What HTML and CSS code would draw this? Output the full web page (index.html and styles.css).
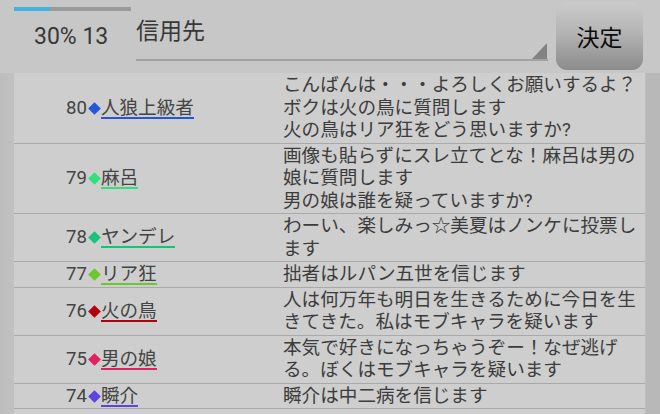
FILE: index.html
```html
<!DOCTYPE html>
<html lang="ja">
<head>
    <meta charset="UTF-8">
    <meta name="viewport" content="width=device-width, initial-scale=1.0">
    <title>信用先</title>
    <link rel="stylesheet" href="styles.css">
</head>
<body>
    <div class="top">
        <div class="stats">
            <div class="progress"><div class="progress-fill"></div></div>
            <div class="score">30% 13</div>
        </div>
        <div class="spinner">
            <span class="spinner-label">信用先</span>
            <span class="spinner-arrow"></span>
        </div>
        <div class="decide">決定</div>
    </div>

    <div class="list-wrap">
        <div class="list">
            <div class="row">
                <div class="who">80<i class="dia c-blue"></i><span class="name c-blue">人狼上級者</span></div>
                <div class="msg">こんばんは・・・よろしくお願いするよ？<br>ボクは火の鳥に質問します<br>火の鳥はリア狂をどう思いますか?</div>
            </div>
            <div class="row">
                <div class="who">79<i class="dia c-green"></i><span class="name c-green">麻呂</span></div>
                <div class="msg">画像も貼らずにスレ立てとな！麻呂は男の娘に質問します<br>男の娘は誰を疑っていますか?</div>
            </div>
            <div class="row">
                <div class="who">78<i class="dia c-teal"></i><span class="name c-teal">ヤンデレ</span></div>
                <div class="msg">わーい、楽しみっ☆美夏はノンケに投票します</div>
            </div>
            <div class="row">
                <div class="who">77<i class="dia c-lime"></i><span class="name c-lime">リア狂</span></div>
                <div class="msg">拙者はルパン五世を信じます</div>
            </div>
            <div class="row">
                <div class="who">76<i class="dia c-red"></i><span class="name c-red">火の鳥</span></div>
                <div class="msg">人は何万年も明日を生きるために今日を生きてきた。私はモブキャラを疑います</div>
            </div>
            <div class="row">
                <div class="who">75<i class="dia c-pink"></i><span class="name c-pink">男の娘</span></div>
                <div class="msg">本気で好きになっちゃうぞー！なぜ逃げる。ぼくはモブキャラを疑います</div>
            </div>
            <div class="row">
                <div class="who">74<i class="dia c-violet"></i><span class="name c-violet">瞬介</span></div>
                <div class="msg">瞬介は中二病を信じます</div>
            </div>
        </div>
    </div>
</body>
</html>
```

FILE: styles.css
```css
* {
    margin: 0;
    padding: 0;
    box-sizing: border-box;
}

body {
    width: 660px;
    height: 414px;
    overflow: hidden;
    background: #c7c7c7;
    color: #3c3c3c;
    font-family: Roboto, "Noto Sans CJK JP", sans-serif;
}

/* header: progress, spinner, button */
.top {
    display: flex;
    align-items: flex-start;
    height: 73px;
}

.stats {
    width: 122px;
    padding-left: 14px;
}

.progress {
    width: 117px;
    height: 4px;
    margin-top: 7px;
    background: #9a9a9a;
}

.progress-fill {
    width: 31%;
    height: 100%;
    background: #42b3e0;
}

.score {
    margin-top: 12px;
    padding-left: 20px;
    font-size: 23px;
    line-height: 27px;
    color: #383838;
}

.spinner {
    position: relative;
    width: 412px;
    height: 61px;
    margin-left: 14px;
    padding-top: 18px;
    border-bottom: 2px solid #a2a2a2;
}

.spinner-label {
    font-size: 23px;
    line-height: 27px;
    color: #383838;
}

.spinner-arrow {
    position: absolute;
    right: 1px;
    bottom: 0;
    width: 0;
    height: 0;
    border-left: 15px solid transparent;
    border-bottom: 16px solid #828282;
}

.decide {
    display: flex;
    align-items: center;
    justify-content: center;
    width: 87px;
    height: 68px;
    margin: 2px 0 0 8px;
    padding-bottom: 1px;
    border-radius: 11px;
    background: linear-gradient(#cbcbcb 0%, #b4b4b4 45%, #8b8b8b 100%);
    font-size: 23px;
    color: #0c0c0c;
}

/* list */
.list-wrap {
    height: 341px;
    padding: 0 15px 0 14px;
    background: linear-gradient(90deg, #bdbdbd 0, #c1c1c1 14px, #c1c1c1 645px, #b8b8b8 646px);
}

.list {
    height: 100%;
    background: #cecece;
}

.row {
    display: grid;
    grid-template-columns: 269px 1fr;
    border-bottom: 1px solid #a9a9a9;
}

.who {
    align-self: center;
    padding-left: 52px;
    font-size: 18.6px;
    line-height: 22.5px;
    color: #444;
    white-space: nowrap;
}

.dia {
    display: inline-block;
    width: 9px;
    height: 9px;
    margin: 0 2px 0 3px;
    transform: rotate(45deg);
    vertical-align: 1px;
}

.name {
    display: inline-block;
    line-height: 17px;
    border-bottom: 2px solid;
    color: #444;
}

.msg {
    padding: 1px 0;
    font-size: 18.6px;
    line-height: 22.5px;
    color: #3c3c3c;
}

.c-blue { background: #2555d8; border-color: #2555d8; }
.c-green { background: #2fe07c; border-color: #2fe07c; }
.c-teal { background: #14c47b; border-color: #14c47b; }
.c-lime { background: #6cc830; border-color: #6cc830; }
.c-red { background: #b3000d; border-color: #b3000d; }
.c-pink { background: #e0215d; border-color: #e0215d; }
.c-violet { background: #5b45e0; border-color: #5b45e0; }

.name.c-blue, .name.c-green, .name.c-teal, .name.c-lime,
.name.c-red, .name.c-pink, .name.c-violet {
    background: none;
}
```
